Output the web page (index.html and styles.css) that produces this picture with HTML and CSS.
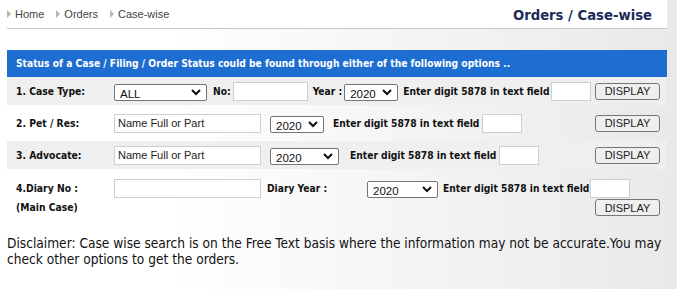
FILE: index.html
```html
<!DOCTYPE html>
<html lang="en">

<head>
    <meta charset="UTF-8">
    <title>Orders / Case-wise</title>
    <link rel="stylesheet" href="styles.css">
</head>

<body>
    <header class="top">
        <div class="top-inner">
            <nav class="crumbs">
                <span class="crumb">Home</span>
                <span class="crumb">Orders</span>
                <span class="crumb">Case-wise</span>
            </nav>
            <h1>Orders / Case-wise</h1>
        </div>
    </header>

    <div class="panel">
        <div class="panel-head">Status of a Case / Filing / Order Status could be found through either of the following options ..</div>

        <!-- 1. case type -->
        <div class="row band">
            <label class="lbl">1. Case Type:</label>
            <div class="controls">
                <span class="sel w-type">
                    <select><option>ALL</option></select>
                    <svg viewBox="0 0 10 7"><polyline points="1,1 5,5 9,1" /></svg>
                </span>
                <span class="txt ml6">No:</span>
                <input type="text" class="inp w-no ml2">
                <span class="txt ml5">Year :</span>
                <span class="sel w-yr ml2">
                    <select><option>2020</option></select>
                    <svg viewBox="0 0 10 7"><polyline points="1,1 5,5 9,1" /></svg>
                </span>
                <span class="txt ml5">Enter digit 5878 in text field</span>
                <input type="text" class="inp w-cap ml1">
                <button class="btn">DISPLAY</button>
            </div>
        </div>

        <!-- 2. party -->
        <div class="row">
            <label class="lbl">2. Pet / Res:</label>
            <div class="controls">
                <input type="text" class="inp w-name" value="Name Full or Part">
                <span class="sel w-yr ml9">
                    <select><option>2020</option></select>
                    <svg viewBox="0 0 10 7"><polyline points="1,1 5,5 9,1" /></svg>
                </span>
                <span class="txt ml9">Enter digit 5878 in text field</span>
                <input type="text" class="inp w-cap ml3">
                <button class="btn">DISPLAY</button>
            </div>
        </div>

        <!-- 3. advocate -->
        <div class="row band">
            <label class="lbl">3. Advocate:</label>
            <div class="controls">
                <input type="text" class="inp w-name" value="Name Full or Part">
                <span class="sel w-yr2 ml9">
                    <select><option>2020</option></select>
                    <svg viewBox="0 0 10 7"><polyline points="1,1 5,5 9,1" /></svg>
                </span>
                <span class="txt ml11">Enter digit 5878 in text field</span>
                <input type="text" class="inp w-cap ml3">
                <button class="btn">DISPLAY</button>
            </div>
        </div>

        <!-- 4. diary no -->
        <div class="row diary">
            <label class="lbl">4.Diary No :<br>(Main Case)</label>
            <div class="controls-stack">
                <div class="controls">
                    <input type="text" class="inp w-name">
                    <span class="txt ml6 w-dy">Diary Year :</span>
                    <span class="sel w-yr3">
                        <select><option>2020</option></select>
                        <svg viewBox="0 0 10 7"><polyline points="1,1 5,5 9,1" /></svg>
                    </span>
                    <span class="txt ml5">Enter digit 5878 in text field</span>
                    <input type="text" class="inp w-cap ml1">
                </div>
                <div class="btn-line">
                    <button class="btn">DISPLAY</button>
                </div>
            </div>
        </div>
    </div>

    <p class="disclaimer">Disclaimer: Case wise search is on the Free Text basis where the information may not be accurate.You may check other options to get the orders.</p>
</body>

</html>
```

FILE: styles.css
```css
body {
    margin: 0;
    padding: 0;
    font-family: 'DejaVu Sans Condensed', 'DejaVu Sans', sans-serif;
    color: #111;
    background: linear-gradient(to right, #ffffff 25%, #e9e9e9 100%);
    min-height: 289px;
}

.top {
    width: 667px;
    background-color: #fff;
}

.top-inner {
    margin-left: 7px;
    height: 28px;
    border-bottom: 1px solid #c8c8c8;
    display: flex;
    align-items: center;
    justify-content: space-between;
}

.crumbs {
    display: flex;
    font-family: 'Liberation Sans', Arial, sans-serif;
    font-size: 11px;
    color: #444;
}

.crumb {
    display: flex;
    align-items: center;
    margin-right: 12px;
}

.crumb::before {
    content: "";
    border-left: 4px solid #b5b5b5;
    border-top: 4px solid transparent;
    border-bottom: 4px solid transparent;
    margin-right: 4px;
}

.top h1 {
    margin: 0 15px 0 0;
    font-size: 14.7px;
    font-weight: bold;
    color: #1b2b5a;
}

.panel {
    margin: 21px 0 0 7px;
    width: 660px;
}

.panel-head {
    background-color: #1e6ed2;
    color: #fff;
    font-weight: bold;
    font-size: 10.2px;
    height: 27px;
    line-height: 27px;
    padding-left: 9px;
}

.row {
    display: flex;
    align-items: center;
    height: 28px;
    margin-bottom: 4px;
    padding: 0 7px 0 9px;
}

.row.band {
    background-color: #efefef;
}

.lbl {
    width: 98px;
    flex-shrink: 0;
    font-weight: bold;
    font-size: 10.3px;
    line-height: 19px;
}

.controls {
    flex: 1;
    display: flex;
    align-items: center;
}

.txt {
    font-weight: bold;
    font-size: 10.2px;
    white-space: nowrap;
}

.inp {
    box-sizing: border-box;
    height: 19px;
    border: 1px solid #cfcfcf;
    background-color: #fff;
    font-family: 'Liberation Sans', Arial, sans-serif;
    font-size: 11px;
    color: #222;
    padding: 0 3px;
    margin: 0;
}

.sel {
    position: relative;
    display: inline-block;
    height: 17px;
}

.sel select {
    appearance: none;
    -webkit-appearance: none;
    box-sizing: border-box;
    width: 100%;
    height: 17px;
    border: 1px solid #767676;
    border-radius: 2px;
    background-color: #fff;
    font-family: 'Liberation Sans', Arial, sans-serif;
    font-size: 11.5px;
    color: #111;
    padding: 3px 0 0 5px;
    margin: 0;
}

.sel svg {
    position: absolute;
    right: 6px;
    top: 6px;
    width: 10px;
    height: 7px;
    fill: none;
    stroke: #111;
    stroke-width: 2;
}

.btn {
    margin-left: auto;
    box-sizing: border-box;
    width: 65px;
    height: 17px;
    border: 1px solid #767676;
    border-radius: 3px;
    background-color: #efefef;
    font-family: 'Liberation Sans', Arial, sans-serif;
    font-size: 11px;
    color: #222;
    padding: 0;
}

.w-type { width: 93px; }
.w-yr { width: 54px; }
.w-yr2 { width: 69px; }
.w-yr3 { width: 71px; }
.w-no { width: 75px; }
.w-cap { width: 40px; }
.w-name { width: 147px; }
.w-dy { width: 100px; }

.ml1 { margin-left: 1px; }
.ml2 { margin-left: 2px; }
.ml3 { margin-left: 3px; }
.ml5 { margin-left: 5px; }
.ml6 { margin-left: 6px; }
.ml9 { margin-left: 9px; }
.ml11 { margin-left: 11px; }

.row.diary {
    height: auto;
    align-items: flex-start;
    padding-top: 6px;
}

.diary .lbl {
    line-height: 19px;
}

.controls-stack {
    flex: 1;
}

.btn-line {
    display: flex;
    justify-content: flex-end;
    margin-top: 1px;
}

.disclaimer {
    margin: 18px 0 0 7px;
    width: 662px;
    font-size: 13.6px;
    line-height: 16px;
    color: #111;
}
```
